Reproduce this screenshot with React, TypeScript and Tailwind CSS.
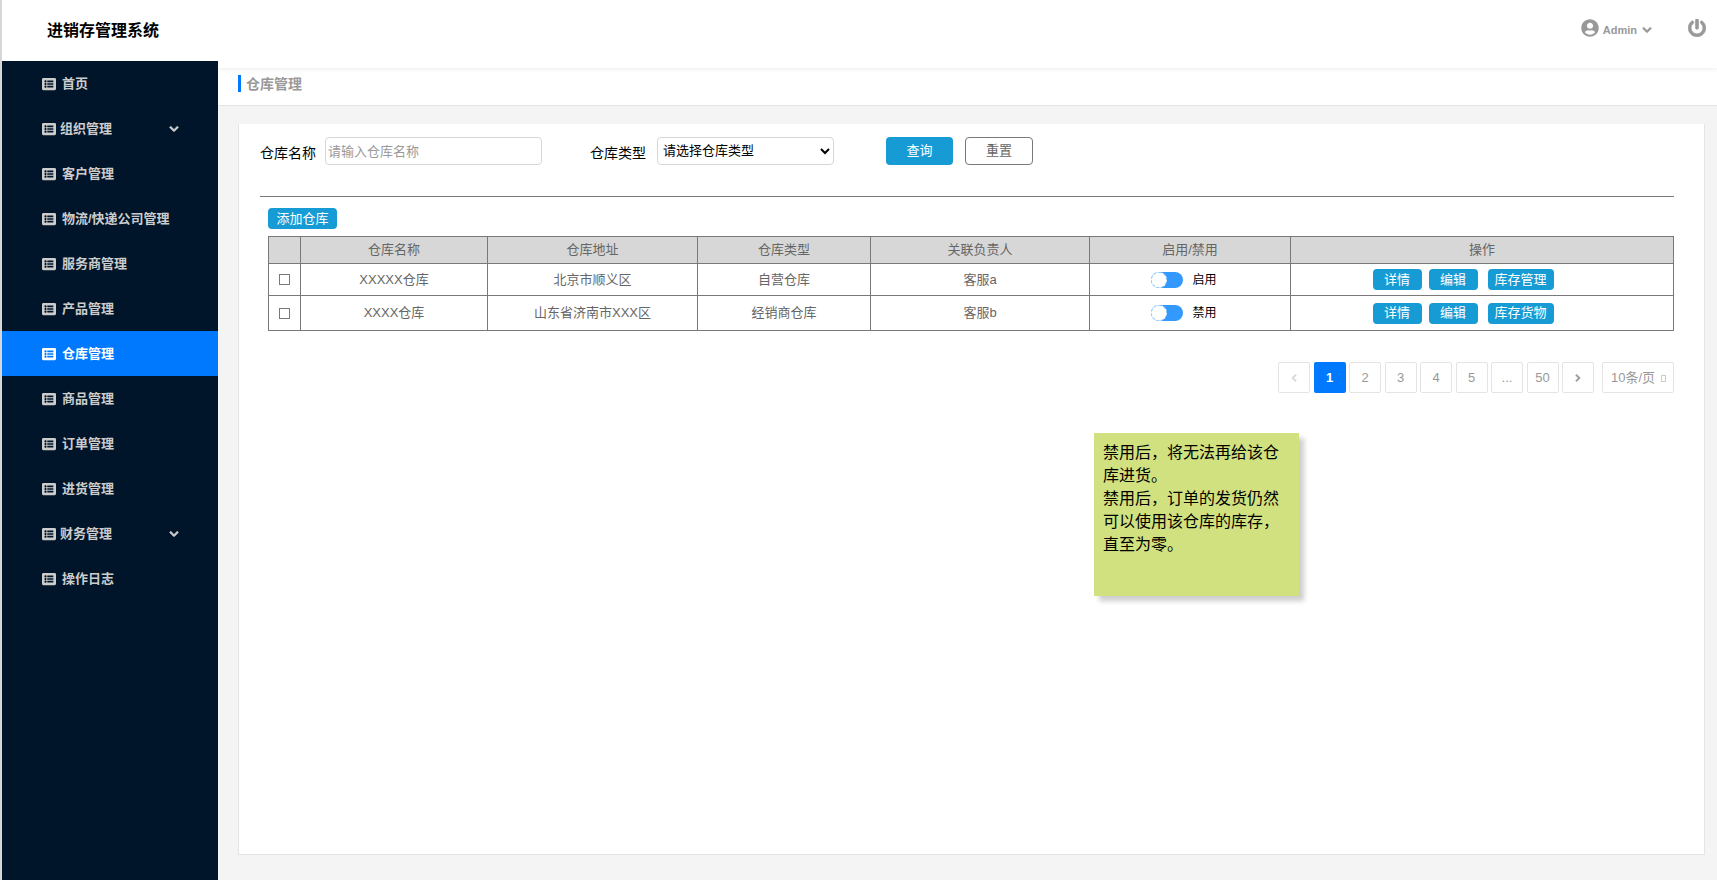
import React, { useState } from "react";
import { FaChevronDown, FaChevronLeft, FaChevronRight, FaListAlt, FaPowerOff, FaUserCircle } from "react-icons/fa";

const menu = [
  { label: "首页" },
  { label: "组织管理", children: true },
  { label: "客户管理" },
  { label: "物流/快递公司管理" },
  { label: "服务商管理" },
  { label: "产品管理" },
  { label: "仓库管理" },
  { label: "商品管理" },
  { label: "订单管理" },
  { label: "进货管理" },
  { label: "财务管理", children: true },
  { label: "操作日志" },
];

const rows = [
  { name: "XXXXX仓库", address: "北京市顺义区", type: "自营仓库", owner: "客服a", status: "启用", stock: "库存管理", height: "h-8" },
  { name: "XXXX仓库", address: "山东省济南市XXX区", type: "经销商仓库", owner: "客服b", status: "禁用", stock: "库存货物", height: "h-[35px]" },
];

const pages = ["1", "2", "3", "4", "5", "...", "50"];

const Sidebar: React.FC = () => (
  <aside className="w-[216px] shrink-0 flex flex-col relative z-10">
    <h1 className="h-[61px] pl-[45px] flex items-center bg-white text-base font-bold text-black">
      进销存管理系统
    </h1>
    <nav className="flex-1 bg-[#001529]">
      {menu.map((item) => (
        <a
          key={item.label}
          href="#"
          className={
            item.label === "仓库管理"
              ? "h-[45px] pl-10 pr-[39px] pt-px flex items-center text-[13px] font-bold bg-[#0079fe] text-white"
              : "h-[45px] pl-10 pr-[39px] pt-px flex items-center text-[13px] font-bold text-[#ccc]"
          }
        >
          <FaListAlt className="size-[14px]" />
          <span className={item.children ? "ml-1 whitespace-nowrap" : "ml-[6px] whitespace-nowrap"}>{item.label}</span>
          {item.children && <FaChevronDown className="ml-auto size-[10px] stroke-current stroke-[40px]" />}
        </a>
      ))}
    </nav>
  </aside>
);

const Header: React.FC = () => (
  <header className="h-[68px] pr-[11px] pb-3 flex items-center justify-end bg-white text-[#999] shadow-[0_1px_5px_rgba(0,0,0,0.08)] relative">
    <button className="flex items-center">
      <FaUserCircle className="size-[18px]" />
      <span className="ml-1 pt-1 text-[11px] font-bold">Admin</span>
      <FaChevronDown className="ml-[5px] mt-1 size-[10px] stroke-current stroke-[40px]" />
    </button>
    <button aria-label="退出" className="ml-9">
      <FaPowerOff className="size-[18px] stroke-current stroke-[20px]" />
    </button>
  </header>
);

const Filters: React.FC = () => (
  <form className="h-[60px] flex items-start border-b border-[#797979]" onSubmit={(e) => e.preventDefault()}>
    <label htmlFor="name" className="w-[65px] pt-[6px] text-sm">仓库名称</label>
    <input
      id="name"
      placeholder="请输入仓库名称"
      className="w-[217px] h-7 px-[2px] border border-[#d7d7d7] rounded text-[13px] placeholder:text-[#999]"
    />
    <label htmlFor="type" className="ml-12 w-[67px] pt-[6px] text-sm">仓库类型</label>
    <select id="type" className="w-[177px] h-7 px-px pb-[2px] border border-[#d7d7d7] rounded bg-white text-[13px] text-black">
      <option>请选择仓库类型</option>
    </select>
    <button className="ml-[52px] w-[67px] h-7 rounded bg-[#169bd5] text-[13px] text-white">查询</button>
    <button type="reset" className="ml-3 w-[68px] h-7 rounded border border-[#797979] text-[13px] text-[#666]">重置</button>
  </form>
);

const Switch: React.FC<{ label: string }> = ({ label }) => {
  const [on, setOn] = useState(false);
  return (
    <label className="flex items-center justify-center pr-3 text-xs text-black">
      <input type="checkbox" className="sr-only" checked={on} onChange={() => setOn(!on)} />
      <span className={on ? "w-8 h-4 flex justify-end rounded-full bg-[#3399ff]" : "w-8 h-4 flex rounded-full bg-[#3399ff]"}>
        <span className="size-4 rounded-full bg-white border border-dashed border-[#a9d1fb]" />
      </span>
      <span className="ml-[9px]">{label}</span>
    </label>
  );
};

const WarehouseTable: React.FC = () => (
  <table className="mt-[7px] w-full table-fixed border-collapse text-center text-[13px] text-[#666] [&_td]:border [&_td]:border-[#797979] [&_th]:border [&_th]:border-[#797979] [&_th]:font-normal">
    <colgroup>
      <col className="w-8" />
      <col className="w-[187px]" />
      <col className="w-[210px]" />
      <col className="w-[173px]" />
      <col className="w-[219px]" />
      <col className="w-[201px]" />
      <col />
    </colgroup>
    <thead>
      <tr className="h-[27px] bg-[#d7d7d7]">
        <th></th>
        <th>仓库名称</th>
        <th>仓库地址</th>
        <th>仓库类型</th>
        <th>关联负责人</th>
        <th>启用/禁用</th>
        <th>操作</th>
      </tr>
    </thead>
    <tbody>
      {rows.map((row) => (
        <tr key={row.name} className={row.height}>
          <td>
            <input
              type="checkbox"
              aria-label={row.name}
              className="block mx-auto size-[11px] appearance-none border border-[#797979] checked:bg-[#169bd5]"
            />
          </td>
          <td>{row.name}</td>
          <td>{row.address}</td>
          <td>{row.type}</td>
          <td>{row.owner}</td>
          <td><Switch label={row.status} /></td>
          <td>
            <div className="flex items-center justify-center pr-[38px] text-white">
              <button className="w-[49px] h-[21px] rounded bg-[#169bd5]">详情</button>
              <button className="ml-[7px] w-[49px] h-[21px] rounded bg-[#169bd5]">编辑</button>
              <button className="ml-[10px] w-[66px] h-[21px] rounded bg-[#169bd5]">{row.stock}</button>
            </div>
          </td>
        </tr>
      ))}
    </tbody>
  </table>
);

const Pagination: React.FC = () => (
  <div className="mt-[31px] flex justify-end text-[13px] text-[#999]">
    <div className="w-[316px] flex justify-between">
      <button aria-label="上一页" className="w-8 h-[31px] flex items-center justify-center border border-[#e4e4e4] rounded-xs text-[#d7d7d7]">
        <FaChevronLeft className="size-2 stroke-current stroke-[60px]" />
      </button>
      {pages.map((page) => (
        <button
          key={page}
          className={
            page === "1"
              ? "w-8 h-[31px] rounded-xs bg-[#0079fe] font-bold text-white"
              : "w-8 h-[31px] border border-[#e4e4e4] rounded-xs"
          }
        >
          {page}
        </button>
      ))}
      <button aria-label="下一页" className="w-8 h-[31px] flex items-center justify-center border border-[#e4e4e4] rounded-xs">
        <FaChevronRight className="size-2 stroke-current stroke-[60px]" />
      </button>
    </div>
    <div className="relative ml-2">
      <select aria-label="每页条数" className="w-[72px] h-[31px] pl-2 appearance-none border border-[#e4e4e4] rounded-xs">
        <option>10条/页</option>
      </select>
      <span className="absolute right-2 top-[13px] w-[5px] h-[7px] border border-[#ccc] pointer-events-none" />
    </div>
  </div>
);

const App: React.FC = () => {
  return (
    <div className="min-h-screen flex border-l-2 border-[#d7d7d7] bg-[#f4f4f4] font-['Liberation_Sans','Noto_Sans_CJK_SC',sans-serif] text-black">
      <Sidebar />
      <div className="flex-1 min-w-0 flex flex-col">
        <Header />
        <div className="h-[38px] pl-5 pb-[6px] flex items-center bg-white border-b border-[#e4e4e4]">
          <span className="w-[3px] h-[17px] bg-[#0079fe]" />
          <h2 className="ml-[5px] text-sm font-bold text-[#999]">仓库管理</h2>
        </div>

        <main className="relative flex-1 mt-[18px] ml-5 mr-3 mb-[25px] pt-[13px] pl-[21px] pr-[30px] bg-white border border-t-0 border-[#e4e4e4]">
          <Filters />
          <div className="pl-2">
            <button className="block mt-[11px] w-[69px] h-[21px] rounded bg-[#169bd5] text-[13px] text-white">添加仓库</button>
            <WarehouseTable />
          </div>
          <Pagination />

          {/* Sticky note */}
          <div className="absolute top-[309px] right-[405px] w-[205px] h-[163px] px-[9px] py-2 bg-[#d1e17f] text-base leading-[23px] shadow-[5px_5px_5px_rgba(0,0,0,0.2)]">
            <p>禁用后，将无法再给该仓库进货。</p>
            <p>禁用后，订单的发货仍然可以使用该仓库的库存，直至为零。</p>
          </div>
        </main>
      </div>
    </div>
  );
};

export default App;
